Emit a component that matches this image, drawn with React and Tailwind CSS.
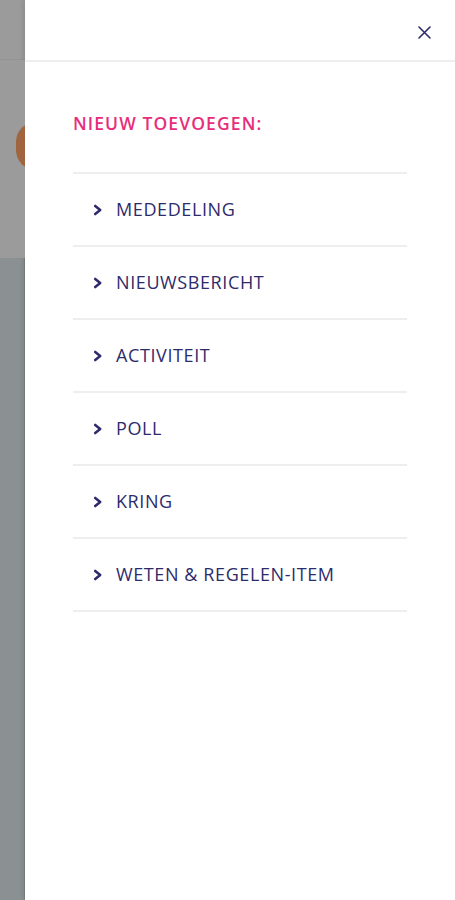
import React from "react";

const items = ["MEDEDELING", "NIEUWSBERICHT", "ACTIVITEIT", "POLL", "KRING", "WETEN & REGELEN-ITEM"];

function Chevron() {
  return (
    <svg width="10" height="12" viewBox="0 0 10 12" className="shrink-0">
      <path d="M2.2 2 L7.2 6 L2.2 10" fill="none" stroke="#2e2b6b" strokeWidth="2.6" strokeLinecap="round" strokeLinejoin="round" />
    </svg>
  );
}

export default function App() {
  return (
    <div className="flex w-[455px] h-[900px] overflow-hidden" style={{ fontFamily: '"Open Sans", "Noto Sans", sans-serif' }}>
      <div className="w-[25px] shrink-0 flex flex-col">
        <div className="h-[60px] bg-[#9b9b9b] border-b border-[#929292]"></div>
        <div className="h-[198px] bg-[#9b9b9b] relative overflow-hidden">
          <div className="absolute left-[16px] top-[62px] w-[40px] h-[48px] rounded-full bg-[#a0653f]"></div>
        </div>
        <div className="flex-1 bg-[#8b9093] border-r border-[#7d8285]"></div>
      </div>
      <div className="flex-1 bg-white flex flex-col shadow-[-2px_0_4px_rgba(0,0,0,0.1)]">
        <div className="h-[62px] border-b-2 border-[#eeeeee] flex items-start justify-end pr-[24px] pt-[26px]">
          <svg width="13" height="13" viewBox="0 0 13 13">
            <path d="M1 1 L12 12 M12 1 L1 12" stroke="#2e2b6b" strokeWidth="1.6" strokeLinecap="round" />
          </svg>
        </div>
        <div className="pl-[48px] pr-[48px] pt-[50px]">
          <div className="text-[17.5px] leading-[22px] font-semibold tracking-[1.1px] text-[#e62e7b]">NIEUW TOEVOEGEN:</div>
          <div className="mt-[38px] border-t-2 border-[#eeeeee]">
            {items.map((t) => (
              <div key={t} className="h-[73px] border-b-2 border-[#eeeeee] flex items-center pl-[20px] gap-[13px]">
                <Chevron />
                <span className="text-[18px] font-medium text-[#2e2b6b] tracking-[0.6px]">{t}</span>
              </div>
            ))}
          </div>
        </div>
      </div>
    </div>
  );
}
